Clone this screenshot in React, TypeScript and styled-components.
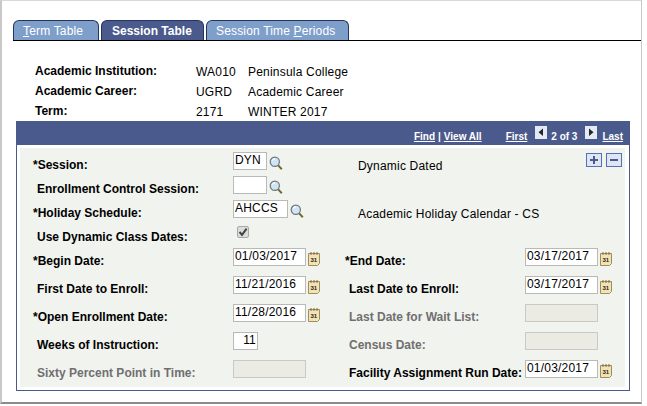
import styled, { createGlobalStyle } from 'styled-components'

const GlobalStyle = createGlobalStyle`
  html, body {
    margin: 0;
    padding: 0;
    background: #fff;
  }
  body {
    font-family: "Liberation Sans", Arial, sans-serif;
    font-size: 12px;
    color: #000;
  }
`

const Frame = styled.div`
  box-sizing: border-box;
  width: 642px;
  height: 404px;
  border-top: 1px solid #d8d8d8;
  border-left: 2px solid #c8c8c8;
  border-right: 1px solid #c8c8c8;
  border-bottom: 2px solid #8c8c8c;
  padding: 19px 0 0 11px;
  background: #fff;
`

const TabBar = styled.div`
  display: flex;
  gap: 2px;
  height: 20px;
  border-bottom: 1px solid #000;
`

const Tab = styled.div<{ $active?: boolean; $width: number; $pad: number }>`
  box-sizing: border-box;
  height: 20px;
  width: ${p => p.$width}px;
  padding: 3px 0 0 ${p => p.$pad}px;
  border: 1px solid #26355f;
  border-bottom: none;
  border-radius: 6px 6px 0 0;
  background: ${p => (p.$active ? '#4a5a8c' : '#7f9fcb')};
  color: #fff;
  font-weight: ${p => (p.$active ? 'bold' : 'normal')};
  letter-spacing: ${p => (p.$active ? 0 : 0.17)}px;
  font-size: 12px;
  white-space: nowrap;
`

const Header = styled.div`
  display: grid;
  grid-template-columns: 161px 52px 1fr;
  grid-auto-rows: 20px;
  padding: 20px 0 0 22px;
  height: 60px;
`

const HeadLabel = styled.div`
  font-weight: bold;
  line-height: 20px;
`

const HeadValue = styled.div`
  line-height: 22px;
  letter-spacing: 0.2px;
`

const Panel = styled.div`
  box-sizing: border-box;
  width: 614px;
  margin-left: 3px;
  border: 1px solid #4a5a8c;
  border-top: none;
  height: 270px;
`

const NavBar = styled.div`
  height: 24px;
  margin: 0 -1px;
  background: #4a5a8c;
  color: #fff;
  font-weight: bold;
  font-size: 10px;
  display: flex;
  align-items: center;
  justify-content: flex-end;
  padding-right: 7px;
`

const NavLink = styled.span<{ $gap?: number }>`
  text-decoration: underline;
  margin-left: ${p => p.$gap ?? 0}px;
  margin-top: 6px;
`

const NavText = styled.span<{ $gap?: number }>`
  margin: 6px ${p => p.$gap ?? 0}px 0;
`

const ArrowButton = styled.svg<{ $before: number }>`
  display: block;
  width: 12px;
  height: 13px;
  margin: -2px 0 0 ${p => p.$before}px;
`

const Body = styled.div`
  margin: 3px 4px 0 3px;
  background: #f1f3ee;
  height: 239px;
  box-sizing: border-box;
  padding: 4px 0 0 13px;
  display: grid;
  grid-template-columns: 200px 112px 180px 1fr;
  grid-template-rows: repeat(4, 24px) repeat(4, 28px) 27px;
  position: relative;
`

const FormLabel = styled.div<{ $muted?: boolean; $req?: boolean }>`
  font-weight: bold;
  color: ${p => (p.$muted ? '#6f6f70' : '#000')};
  padding-left: ${p => (p.$req ? 0 : 4)}px;
  padding-top: 5px;
  line-height: 16px;
  white-space: nowrap;
`

const FieldCell = styled.div`
  display: flex;
  align-items: flex-start;
  gap: 2px;
`

const WideCell = styled(FieldCell)`
  grid-column: 2 / span 3;
  position: relative;
`

const Description = styled.span`
  position: absolute;
  left: 125px;
  top: 6px;
  line-height: 16px;
  letter-spacing: 0.2px;
`

const TextInput = styled.input<{ $w: number; $align?: string }>`
  box-sizing: border-box;
  width: ${p => p.$w}px;
  height: 18px;
  margin: 0;
  padding: 0 1px 2px 1px;
  border: 1px solid #b9bab6;
  border-radius: 0;
  background: #fff;
  color: #000;
  font: 12px "Liberation Sans", Arial, sans-serif;
  letter-spacing: 0.2px;
  text-align: ${p => p.$align ?? 'left'};
  outline: none;
`

const DisabledInput = styled.div`
  box-sizing: border-box;
  width: 73px;
  height: 18px;
  border: 1px solid #c9cac5;
  background: #ebebe4;
`

const CheckBox = styled.span`
  display: block;
  box-sizing: border-box;
  width: 12px;
  height: 12px;
  margin: 2px 0 0 4px;
  border: 1px solid #a8a8a8;
  border-radius: 2px;
  background: #dcdcdc;
`

const LookupIcon = styled.svg`
  display: block;
  flex: none;
  margin-top: 4px;
`

const CalendarIcon = styled.svg`
  display: block;
  flex: none;
  margin-top: 3px;
`

const GridTools = styled.div`
  position: absolute;
  top: 5px;
  right: 3px;
  display: flex;
  gap: 4px;
`

const ToolButton = styled.span`
  box-sizing: border-box;
  display: flex;
  align-items: center;
  justify-content: center;
  width: 16px;
  height: 14px;
  border: 1px solid #5570b8;
  background: #dfe6f3;
`

const Lookup = () => (
  <LookupIcon width="14" height="14" viewBox="0 0 14 14">
    <circle cx="5.8" cy="5.8" r="4.6" fill="#cfe4f4" stroke="#6d7480" strokeWidth="1.2" />
    <path d="M3.4 4.6 A3 3 0 0 1 6.2 2.8" fill="none" stroke="#fff" strokeWidth="1.2" />
    <path d="M9.2 9.4 L12.8 13.2" stroke="#6f6a2e" strokeWidth="2" />
  </LookupIcon>
)

const Calendar = () => (
  <CalendarIcon width="12" height="15" viewBox="0 0 12 15">
    <path d="M.5 2.5H11.5V12.5L9.5 14.5H.5Z" fill="#f3e3b4" stroke="#a08c5a" />
    <path d="M3 1V4M6 1V4M9 1V4" stroke="#7d6d42" />
    <text x="2.5" y="11" fontSize="6" fontWeight="bold" fontFamily="Liberation Sans" fill="#222">31</text>
  </CalendarIcon>
)

const Arrow = ({ dir, before }: { dir: 'left' | 'right'; before: number }) => (
  <ArrowButton $before={before} viewBox="0 0 12 13">
    <rect width="12" height="13" fill="#e4eaf4" />
    <path d={dir === 'left' ? 'M8 2.5V10L3.5 6.2Z' : 'M4 2.5V10L8.5 6.2Z'} fill="#23252c" />
  </ArrowButton>
)

const DateField = ({ value }: { value: string }) => (
  <FieldCell>
    <TextInput $w={73} value={value} readOnly />
    <Calendar />
  </FieldCell>
)

const DisabledField = () => (
  <FieldCell>
    <DisabledInput />
  </FieldCell>
)

const App = () => (
  <Frame>
    <GlobalStyle />
    <TabBar>
      <Tab $width={86} $pad={9}>
        <u>T</u>erm Table
      </Tab>
      <Tab $active $width={103} $pad={10}>
        Session Table
      </Tab>
      <Tab $width={143} $pad={9}>
        Session Time <u>P</u>eriods
      </Tab>
    </TabBar>
    <Header>
      <HeadLabel>Academic Institution:</HeadLabel>
      <HeadValue>WA010</HeadValue>
      <HeadValue>Peninsula College</HeadValue>
      <HeadLabel>Academic Career:</HeadLabel>
      <HeadValue>UGRD</HeadValue>
      <HeadValue>Academic Career</HeadValue>
      <HeadLabel>Term:</HeadLabel>
      <HeadValue>2171</HeadValue>
      <HeadValue>WINTER 2017</HeadValue>
    </Header>
    <Panel>
      <NavBar>
        <NavLink>Find</NavLink>
        <NavText $gap={3}>|</NavText>
        <NavLink>View All</NavLink>
        <NavLink $gap={24}>First</NavLink>
        <Arrow dir="left" before={8} />
        <NavText $gap={4}>2 of 3</NavText>
        <Arrow dir="right" before={4} />
        <NavLink $gap={5}>Last</NavLink>
      </NavBar>
      <Body>
        <FormLabel $req>*Session:</FormLabel>
        <WideCell>
          <TextInput $w={34} value="DYN" readOnly />
          <Lookup />
          <Description>Dynamic Dated</Description>
        </WideCell>
        <FormLabel>Enrollment Control Session:</FormLabel>
        <WideCell>
          <TextInput $w={34} value="" readOnly />
          <Lookup />
        </WideCell>
        <FormLabel $req>*Holiday Schedule:</FormLabel>
        <WideCell>
          <TextInput $w={55} value="AHCCS" readOnly />
          <Lookup />
          <Description>Academic Holiday Calendar - CS</Description>
        </WideCell>
        <FormLabel>Use Dynamic Class Dates:</FormLabel>
        <WideCell>
          <CheckBox>
            <svg width="10" height="10" viewBox="0 0 10 10" style={{ display: 'block' }}>
              <path d="M1.5 5 L4 7.8 L8.6 1.6" fill="none" stroke="#444" strokeWidth="2" />
            </svg>
          </CheckBox>
        </WideCell>
        <FormLabel $req>*Begin Date:</FormLabel>
        <DateField value="01/03/2017" />
        <FormLabel $req>*End Date:</FormLabel>
        <DateField value="03/17/2017" />
        <FormLabel>First Date to Enroll:</FormLabel>
        <DateField value="11/21/2016" />
        <FormLabel>Last Date to Enroll:</FormLabel>
        <DateField value="03/17/2017" />
        <FormLabel $req>*Open Enrollment Date:</FormLabel>
        <DateField value="11/28/2016" />
        <FormLabel $muted>Last Date for Wait List:</FormLabel>
        <DisabledField />
        <FormLabel>Weeks of Instruction:</FormLabel>
        <FieldCell>
          <TextInput $w={25} $align="right" value="11" readOnly />
        </FieldCell>
        <FormLabel $muted>Census Date:</FormLabel>
        <DisabledField />
        <FormLabel $muted>Sixty Percent Point in Time:</FormLabel>
        <DisabledField />
        <FormLabel>Facility Assignment Run Date:</FormLabel>
        <DateField value="01/03/2017" />
        <GridTools>
          <ToolButton>
            <svg width="10" height="10" viewBox="0 0 10 10">
              <path d="M5 1V9M1 5H9" stroke="#4a5a8c" strokeWidth="2" />
            </svg>
          </ToolButton>
          <ToolButton>
            <svg width="10" height="10" viewBox="0 0 10 10">
              <path d="M1 5H9" stroke="#4a5a8c" strokeWidth="2" />
            </svg>
          </ToolButton>
        </GridTools>
      </Body>
    </Panel>
  </Frame>
)

export default App
